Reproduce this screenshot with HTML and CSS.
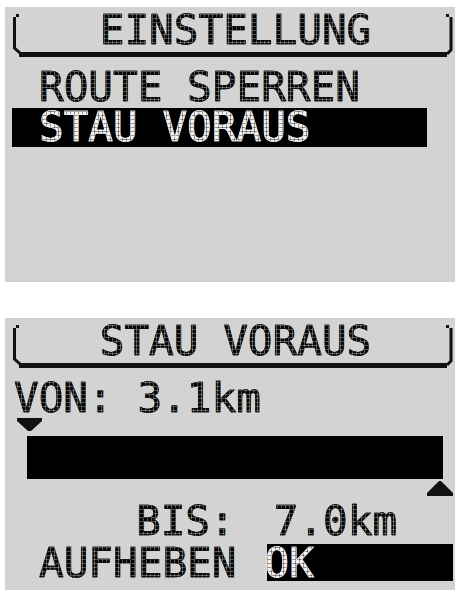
FILE: index.html
```html
<!doctype html>
<html lang="de">
  <head>
    <meta charset="UTF-8" />
    <meta name="viewport" content="width=device-width, initial-scale=1.0" />
    <link rel="stylesheet" href="styles.css">
    <title>Stau voraus</title>
  </head>
  <body>
    <!-- Menu screen -->
    <div class="screen screen-top">
      <div class="title">
        <svg class="frame" width="450" height="46" viewBox="0 0 450 46">
          <rect x="11" y="3" width="3" height="3" />
          <path d="M9.5 6 V37 L15 42" />
          <rect x="14" y="41" width="428" height="5" />
          <rect x="441" y="3" width="3" height="3" />
          <path d="M446 6 V39 L442 43" />
        </svg>
        <h1 class="lcd title-text">EINSTELLUNG</h1>
      </div>
      <ul class="menu">
        <li><span class="lcd">ROUTE SPERREN</span></li>
        <li class="selected"><span class="lcd">STAU VORAUS</span></li>
      </ul>
    </div>

    <!-- Range screen -->
    <div class="screen screen-bottom">
      <div class="title">
        <svg class="frame" width="450" height="46" viewBox="0 0 450 46">
          <rect x="11" y="3" width="3" height="3" />
          <path d="M9.5 6 V37 L15 42" />
          <rect x="14" y="41" width="428" height="5" />
          <rect x="441" y="3" width="3" height="3" />
          <path d="M446 6 V39 L442 43" />
        </svg>
        <h1 class="lcd title-text">STAU VORAUS</h1>
      </div>
      <p class="von"><span class="lcd">VON: 3.1km</span></p>
      <svg class="marker marker-start" width="26" height="13" viewBox="0 0 26 13">
        <polygon points="0,0 25,0 25,3 14,13 11,13 0,3" />
      </svg>
      <div class="range"></div>
      <svg class="marker marker-end" width="26" height="15" viewBox="0 0 26 15">
        <polygon points="12,0 14,0 26,12 26,15 0,15 0,12" />
      </svg>
      <p class="bis"><span class="lcd">BIS:</span><span class="lcd">7.0km</span></p>
      <div class="actions">
        <span class="lcd">AUFHEBEN</span>
        <div class="ok"><span class="lcd">OK</span></div>
      </div>
    </div>
  </body>
</html>
```

FILE: styles.css
```css
html,
body {
  margin: 0;
  background: #fff;
}

body {
  font-family: "DejaVu Sans Mono", monospace;
}

.screen {
  width: 450px;
  margin-left: 5px;
  background: #d3d3d3;
  font-size: 41px;
  line-height: 39px;
  overflow: hidden;
}

.screen-top {
  margin-top: 7px;
  height: 275px;
}

.screen-bottom {
  margin-top: 36px;
  height: 272px;
}

/* dot matrix look: glyphs filled with a fine grid */
.lcd {
  --ink: #050505;
  --gap: rgba(211, 211, 211, 0.4);
  display: inline-block;
  height: 39px;
  font-weight: normal;
  -webkit-text-stroke: 0.6px var(--ink);
  color: transparent;
  background-image:
    repeating-linear-gradient(90deg, transparent 0 3px, var(--gap) 3px 4px),
    repeating-linear-gradient(180deg, transparent 0 3px, var(--gap) 3px 4px),
    linear-gradient(var(--ink), var(--ink));
  -webkit-background-clip: text;
  background-clip: text;
}

.title {
  display: grid;
  height: 46px;
  margin-top: 4px;
}

.title > * {
  grid-area: 1 / 1;
}

.frame rect,
.marker polygon {
  fill: #111;
}

.frame path {
  fill: none;
  stroke: #111;
  stroke-width: 3;
}

.title-text {
  display: block;
  margin: 0;
  font-size: inherit;
  text-align: center;
  padding-left: 11px;
}

.menu {
  list-style: none;
  margin: 11px 0 0;
  padding: 0;
}

.menu li {
  height: 39px;
  padding-left: 34px;
  margin-bottom: 1px;
}

.menu .selected {
  box-sizing: border-box;
  width: 415px;
  margin-left: 7px;
  padding-left: 27px;
  background: #000;
}

.selected .lcd,
.ok .lcd {
  --ink: #f4f4f4;
  --gap: rgba(0, 0, 0, 0.4);
}

.von {
  margin: 11px 0 0;
  height: 39px;
  padding-left: 9px;
}

.marker {
  display: block;
}

.marker-start {
  margin-left: 12px;
}

.range {
  width: 416px;
  height: 43px;
  margin: 5px 0 0 22px;
  background: #000;
}

.marker-end {
  margin: 2px 0 0 422px;
}

.bis {
  display: flex;
  gap: 39px;
  height: 39px;
  margin: 6px 0 0;
  padding-left: 131px;
}

.actions {
  display: flex;
  align-items: flex-start;
  margin-top: 3px;
  padding-left: 34px;
}

.ok {
  box-sizing: border-box;
  width: 186px;
  height: 37px;
  margin-left: 31px;
  background: #000;
}

.ok .lcd {
  margin-left: -3px;
}
```
